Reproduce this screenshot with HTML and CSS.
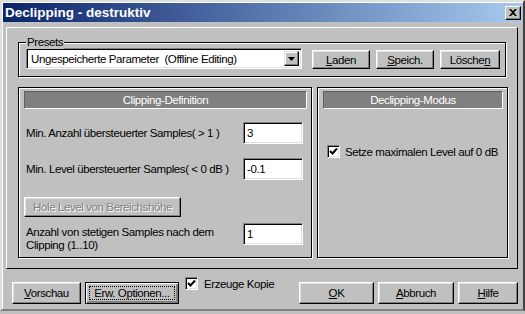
FILE: index.html
```html
<!DOCTYPE html>
<html lang="de">
<head>
  <meta charset="UTF-8">
  <title>Declipping - destruktiv</title>
  <link rel="stylesheet" href="styles.css">
</head>
<body>

<div class="window">
  <div class="titlebar">
    <span class="title">Declipping - destruktiv</span>
    <span class="close">
      <svg width="8" height="7" viewBox="0 0 8 7"><path d="M0 0h2l2 2 2-2h2L5 3.5 8 7H6L4 5 2 7H0l3-3.5z" fill="#000"/></svg>
    </span>
  </div>

  <div class="client">
    <div class="frame">
      <div class="group">
        <span class="group-label">Presets</span>
        <div class="preset-row">
          <div class="combo">
            <span class="combo-text">Ungespeicherte Parameter&nbsp; (Offline Editing)</span>
            <span class="combo-btn">
              <svg width="7" height="4" viewBox="0 0 7 4"><path d="M0 0h7L3.5 4z" fill="#000"/></svg>
            </span>
          </div>
          <button class="btn btn-preset"><u>L</u>aden</button>
          <button class="btn btn-preset"><u>S</u>peich.</button>
          <button class="btn btn-preset btn-wide">Lösche<u>n</u></button>
        </div>
      </div>

      <div class="panels">
        <section class="panel panel-left">
          <div class="panel-head">Clipping-Definition</div>
          <div class="field">
            <span class="field-label">Min. Anzahl übersteuerter Samples( &gt; 1 )</span>
            <span class="edit">3</span>
          </div>
          <div class="field">
            <span class="field-label">Min. Level übersteuerter Samples( &lt; 0 dB )</span>
            <span class="edit">-0.1</span>
          </div>
          <button class="btn btn-disabled">Hole Level von Bereichshöhe</button>
          <div class="field field-multi">
            <span class="field-label">Anzahl von stetigen Samples nach dem<br>Clipping (1..10)</span>
            <span class="edit">1</span>
          </div>
        </section>

        <section class="panel panel-right">
          <div class="panel-head">Declipping-Modus</div>
          <label class="check check-level">
            <span class="box"><svg width="9" height="9" viewBox="0 0 9 9"><path d="M1 4l2.5 2.5L8 1.5" fill="none" stroke="#000" stroke-width="2"/></svg></span>
            Setze maximalen Level auf 0 dB
          </label>
        </section>
      </div>
    </div>

    <div class="footer">
      <button class="btn btn-foot btn-preview"><u>V</u>orschau</button>
      <button class="btn btn-foot btn-focus"><span class="focus-ring">Erw. Optionen...</span></button>
      <label class="check check-copy">
        <span class="box"><svg width="9" height="9" viewBox="0 0 9 9"><path d="M1 4l2.5 2.5L8 1.5" fill="none" stroke="#000" stroke-width="2"/></svg></span>
        Erzeuge Kopie
      </label>
      <button class="btn btn-foot btn-ok"><u>O</u>K</button>
      <button class="btn btn-foot btn-cancel"><u>A</u>bbruch</button>
      <button class="btn btn-foot btn-help"><u>H</u>ilfe</button>
    </div>
  </div>
</div>

</body>
</html>
```

FILE: styles.css
```css
body {
  margin: 0;
  width: 525px;
  height: 314px;
  overflow: hidden;
  background: #c0c0c0;
  font-family: "Liberation Sans", Arial, sans-serif;
  font-size: 11.5px;
  letter-spacing: -0.4px;
  white-space: nowrap;
  color: #000;
}
.window {
  box-sizing: border-box;
  width: 525px;
  height: 311px;
  padding: 1px;
  border: 2px solid;
  border-color: #dfdfdf #404040 #808080 #dfdfdf;
  box-shadow: inset 1px 1px 0 #fff;
  background: #c0c0c0;
}
.titlebar {
  height: 19px;
  display: flex;
  align-items: center;
  justify-content: space-between;
  background: linear-gradient(to right, #0a246a, #a6caf0);
}
.title {
  padding-left: 2px;
  color: #fff;
  font-weight: bold;
  font-size: 13.5px;
  letter-spacing: 0;
}
.close {
  box-sizing: border-box;
  width: 16px;
  height: 14px;
  margin-right: 1px;
  display: flex;
  align-items: center;
  justify-content: center;
  background: #c0c0c0;
  border: 1px solid;
  border-color: #fff #000 #000 #fff;
  box-shadow: inset -1px -1px 0 #808080;
}

/* shared 3d controls */
.btn {
  box-sizing: border-box;
  flex-shrink: 0;
  height: 19px;
  padding: 0;
  background: #c0c0c0;
  border: 1px solid;
  border-color: #fff #000 #000 #fff;
  box-shadow: inset -1px -1px 0 #808080, inset 1px 1px 0 #dfdfdf;
  font: inherit;
  letter-spacing: inherit;
  white-space: nowrap;
  color: #000;
}
.edit {
  box-sizing: border-box;
  flex-shrink: 0;
  width: 60px;
  height: 22px;
  padding: 4px 3px 0;
  background: #fff;
  border: 1px solid;
  border-color: #808080 #fff #fff #808080;
  box-shadow: inset 1px 1px 0 #000, inset -1px -1px 0 #dfdfdf;
}

/* main frame */
.client {
  padding: 5px 3px 0 3px;
}
.frame {
  box-sizing: border-box;
  width: 512px;
  height: 242px;
  border: 1px solid;
  border-color: #fff #000 #000 #fff;
  padding: 14px 0 0 11px;
}
.group {
  position: relative;
  box-sizing: border-box;
  width: 488px;
  height: 35px;
  border: 1px solid #000;
  box-shadow: inset 1px 1px 0 #fff, 1px 1px 0 #fff;
  padding: 5px 0 0 7px;
}
.group-label {
  position: absolute;
  top: -7px;
  left: 7px;
  padding: 0 1px;
  line-height: 13px;
  background: #c0c0c0;
}
.preset-row {
  display: flex;
  align-items: flex-start;
  gap: 6px;
}
.combo {
  box-sizing: border-box;
  width: 276px;
  height: 21px;
  margin-right: 4px;
  display: flex;
  align-items: center;
  justify-content: space-between;
  background: #fff;
  border: 1px solid;
  border-color: #808080 #fff #fff #808080;
  box-shadow: inset 1px 1px 0 #000, inset -1px -1px 0 #dfdfdf;
  padding: 0 2px 0 4px;
}
.combo-btn {
  box-sizing: border-box;
  width: 15px;
  height: 15px;
  display: flex;
  align-items: center;
  justify-content: center;
  background: #c0c0c0;
  border: 1px solid;
  border-color: #dfdfdf #000 #000 #dfdfdf;
  box-shadow: inset -1px -1px 0 #808080, inset 1px 1px 0 #fff;
}
.btn-preset {
  width: 58px;
  margin-top: 2px;
}
.btn-wide {
  width: 60px;
}

/* panels */
.panels {
  display: flex;
  gap: 5px;
  margin-top: 10px;
}
.panel {
  box-sizing: border-box;
  height: 171px;
  border: 1px solid #000;
  box-shadow: inset 1px 1px 0 #fff, 1px 1px 0 #fff;
  padding: 3px 0 0 5px;
}
.panel-left {
  width: 294px;
}
.panel-right {
  width: 191px;
}
.panel-head {
  box-sizing: border-box;
  height: 18px;
  line-height: 16px;
  text-align: center;
  color: #fff;
  background: #808080;
  border: 1px solid;
  border-color: #606060 #fff #fff #606060;
}
.panel-left .panel-head {
  width: 283px;
}
.panel-right .panel-head {
  width: 180px;
}
.field {
  display: flex;
  align-items: center;
  justify-content: space-between;
  margin: 13px 8px 0 2px;
}
.field + .field {
  margin-top: 14px;
}
.field-multi {
  align-items: flex-start;
  margin-top: 6px;
}
.field-multi .field-label {
  margin-top: 3px;
  line-height: 13px;
}
.btn-disabled {
  display: block;
  width: 157px;
  height: 20px;
  margin-top: 17px;
  color: #808080;
  text-shadow: 1px 1px 0 #fff;
}

/* checkboxes */
.check {
  display: flex;
  align-items: center;
  gap: 5px;
}
.box {
  box-sizing: border-box;
  width: 13px;
  height: 13px;
  display: flex;
  align-items: center;
  justify-content: center;
  background: #fff;
  border: 1px solid;
  border-color: #808080 #fff #fff #808080;
  box-shadow: inset 1px 1px 0 #000, inset -1px -1px 0 #dfdfdf;
}
.check-level {
  margin: 36px 0 0 4px;
}

/* footer */
.footer {
  display: flex;
  align-items: flex-start;
  margin-top: 13px;
  padding-left: 6px;
  gap: 4px;
}
.btn-foot {
  height: 22px;
}
.btn-preview {
  width: 69px;
}
.btn-focus {
  width: 94px;
  border: 1px solid #000;
  box-shadow: inset 1px 1px 0 #fff, inset -1px -1px 0 #808080, inset -2px -2px 0 #808080;
  padding: 3px;
}
.focus-ring {
  display: block;
  height: 100%;
  box-sizing: border-box;
  border: 1px dotted #000;
  line-height: 12px;
}
.check-copy {
  margin: -5px 0 0 2px;
  gap: 6px;
}
.btn-ok {
  width: 75px;
  margin-left: auto;
}
.btn-cancel {
  width: 76px;
}
.btn-help {
  width: 60px;
  margin-right: 1px;
}
```
